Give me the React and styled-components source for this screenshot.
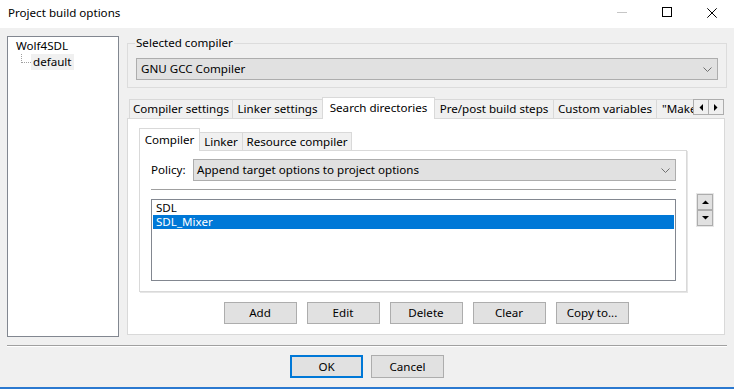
import React from "react";
import styled, { createGlobalStyle } from "styled-components";

const GlobalStyle = createGlobalStyle`
  html, body { margin: 0; padding: 0; background: #f0f0f0; }
  body {
    font-family: "Noto Sans", "Open Sans", sans-serif;
    font-size: 11.6px;
    color: #000;
  }
  * { box-sizing: border-box; }
`;

const Window = styled.div`
  width: 734px;
  height: 389px;
  display: flex;
  flex-direction: column;
  background: #f0f0f0;
  overflow: hidden;
  border-bottom: 2px solid #2b79d0;
`;

const TitleBar = styled.div`
  height: 28px;
  flex: none;
  background: #fff;
  display: flex;
  align-items: center;
  padding-left: 8px;
`;

const Title = styled.span`
  flex: 1;
  line-height: 16px;
  margin-top: -3px;
`;

const WinButton = styled.div`
  width: 45px;
  height: 28px;
  display: flex;
  justify-content: center;
  padding-top: 7px;
`;

const Body = styled.div`
  padding: 8px 7px 0 7px;
  display: flex;
  flex-direction: column;
`;

const MainRow = styled.div`
  display: flex;
  gap: 8px;
  height: 301px;
`;

const Tree = styled.div`
  width: 112px;
  height: 301px;
  flex: none;
  background: #fff;
  border: 1px solid #828790;
  padding: 1px 0 0 6px;
`;

const TreeRow = styled.div`
  height: 16px;
  line-height: 16px;
  display: flex;
  align-items: flex-start;
  padding-left: ${(p) => p.$indent || 0}px;
`;

const Connector = styled.span`
  width: 10px;
  height: 9px;
  flex: none;
  border-left: 1px dotted #a0a0a0;
  border-bottom: 1px dotted #a0a0a0;
`;

const TreeLabel = styled.span`
  padding: 0 2px;
  background: ${(p) => (p.$selected ? "#f0f0f0" : "transparent")};
  height: 16px;
`;

const RightCol = styled.div`
  flex: 1;
  display: flex;
  flex-direction: column;
  min-width: 0;
`;

const GroupBox = styled.fieldset`
  margin: 0;
  height: 52px;
  flex: none;
  padding: 0 8px 0 8px;
  border: 1px solid #dcdcdc;
  min-width: 0;
`;

const Legend = styled.legend`
  padding: 0 1px;
  margin-left: -1px;
  line-height: 14px;
  height: 14px;
`;

const Combo = styled.div`
  height: 22px;
  margin-top: ${(p) => p.$mt || 0}px;
  flex: ${(p) => (p.$grow ? 1 : "none")};
  background: #e1e1e1;
  border: 1px solid #adadad;
  display: flex;
  align-items: center;
  justify-content: space-between;
  padding: 0 5px 0 ${(p) => p.$pl || 4}px;
  line-height: 16px;
`;

const Chevron = () => (
  <svg width="9" height="5" viewBox="0 0 9 5">
    <polyline points="0.5,0.5 4.5,4.5 8.5,0.5" fill="none" stroke="#707070" strokeWidth="1" />
  </svg>
);

const TabStrip = styled.div`
  margin-top: ${(p) => p.$mt || 0}px;
  height: ${(p) => p.$h}px;
  display: flex;
  align-items: flex-start;
  padding-left: ${(p) => p.$pl || 0}px;
  flex: none;
`;

const TabList = styled.div`
  flex: 1;
  min-width: 0;
  height: 100%;
  display: flex;
  align-items: flex-start;
  overflow: hidden;
`;

const Tab = styled.div`
  flex: none;
  width: ${(p) => p.$w}px;
  margin-left: ${(p) => (p.$first ? 0 : -1)}px;
  margin-top: ${(p) => p.$mt}px;
  height: ${(p) => p.$h}px;
  background: ${(p) => (p.$active ? "#fff" : "#f0f0f0")};
  border: 1px solid #d9d9d9;
  border-bottom: none;
  position: relative;
  z-index: ${(p) => (p.$active ? 2 : 1)};
  display: flex;
  align-items: center;
  justify-content: ${(p) => (p.$left ? "flex-start" : "center")};
  padding-left: ${(p) => (p.$left ? 5 : 0)}px;
  padding-bottom: ${(p) => p.$pb || 0}px;
  white-space: nowrap;
  overflow: hidden;
  line-height: 16px;
`;

const ScrollArrows = styled.div`
  flex: none;
  display: flex;
  margin: 2px 3px 0 0;
`;

const ArrowBtn = styled.div`
  width: 16px;
  height: 16px;
  border: 1px solid #adadad;
  margin-left: ${(p) => (p.$second ? -1 : 0)}px;
  background: #f0f0f0;
  display: flex;
  align-items: center;
  justify-content: center;
`;

const Panel = styled.div`
  width: 598px;
  height: 217px;
  margin-top: -1px;
  background: #fff;
  border: 1px solid #d9d9d9;
  padding: 9px 11px 0 11px;
  display: flex;
  flex-direction: column;
`;

const InnerRow = styled.div`
  display: flex;
  gap: 10px;
  align-items: flex-start;
`;

const InnerPanel = styled.div`
  width: 549px;
  height: 142px;
  margin-top: -1px;
  background: #fff;
  border: 1px solid #d9d9d9;
  box-shadow: 1px 1px 0 #e6e6e6;
  padding: 8px 10px 0 11px;
  display: flex;
  flex-direction: column;
`;

const PolicyRow = styled.div`
  display: flex;
  align-items: center;
  height: 22px;
`;

const Label = styled.span`
  width: 42px;
  flex: none;
  line-height: 16px;
`;

const Separator = styled.div`
  height: 1px;
  background: #a0a0a0;
  margin-top: 8px;
  flex: none;
`;

const ListBox = styled.div`
  margin-top: 9px;
  height: 82px;
  border: 1px solid #828790;
  background: #fff;
  padding: 1px;
`;

const ListItem = styled.div`
  height: 14px;
  line-height: 14px;
  padding-left: 3px;
  background: ${(p) => (p.$selected ? "#0078d7" : "transparent")};
  color: ${(p) => (p.$selected ? "#fff" : "#000")};
`;

const Spin = styled.div`
  margin-top: 43px;
  width: 16px;
  display: flex;
  flex-direction: column;
  outline: 1px solid #e6e6e6;
`;

const SpinBtn = styled.div`
  width: 16px;
  height: 16px;
  border: 1px solid #adadad;
  background: #e1e1e1;
  display: flex;
  align-items: center;
  justify-content: center;
`;

const ButtonRow = styled.div`
  display: flex;
  justify-content: center;
  gap: 10px;
  margin-top: 10px;
  margin-left: -11px;
  margin-right: -11px;
`;

const Button = styled.button`
  width: 73px;
  height: ${(p) => (p.$tall ? 23 : 22)}px;
  background: #e1e1e1;
  border: ${(p) => (p.$default ? "2px solid #0078d7" : "1px solid #adadad")};
  font: inherit;
  color: #000;
  padding: 0;
  line-height: 16px;
`;

const HSep = styled.div`
  margin: 8px 7px 0 7px;
  height: 2px;
  border-top: 1px solid #a0a0a0;
  border-bottom: 1px solid #fff;
  flex: none;
`;

const Footer = styled.div`
  flex: 1;
  display: flex;
  justify-content: center;
  align-items: flex-start;
  gap: 8px;
  padding-top: 8px;
`;

const Tri = ({ dir }) => {
  const pts = {
    up: "0,4 3.5,0.5 7,4",
    down: "0,0 7,0 3.5,3.5",
    left: "4,0 4,7 0.5,3.5",
    right: "0,0 0,7 3.5,3.5",
  }[dir];
  const vertical = dir === "up" || dir === "down";
  return (
    <svg width={vertical ? 7 : 4} height={vertical ? 4 : 7} viewBox={vertical ? "0 0 7 4" : "0 0 4 7"}>
      <polygon points={pts} fill="#000" />
    </svg>
  );
};

export default function App() {
  const tabs = [
    { t: "Compiler settings", w: 104 },
    { t: "Linker settings", w: 91 },
    { t: "Search directories", w: 113, active: true },
    { t: "Pre/post build steps", w: 120 },
    { t: "Custom variables", w: 104 },
    { t: "\"Make\" commands", w: 120, left: true },
  ];
  const innerTabs = [
    { t: "Compiler", w: 61, active: true },
    { t: "Linker", w: 44 },
    { t: "Resource compiler", w: 110 },
  ];
  return (
    <>
      <GlobalStyle />
      <Window>
        <TitleBar>
          <Title>Project build options</Title>
          <WinButton>
            <svg width="10" height="10" viewBox="0 0 10 10">
              <line x1="0" y1="5.5" x2="10" y2="5.5" stroke="#c6c6c6" strokeWidth="1" />
            </svg>
          </WinButton>
          <WinButton>
            <svg width="10" height="10" viewBox="0 0 10 10">
              <rect x="0.5" y="0.5" width="9" height="9" fill="none" stroke="#000" strokeWidth="1" />
            </svg>
          </WinButton>
          <WinButton>
            <svg width="10" height="10" viewBox="0 0 10 10" style={{ marginTop: 1 }}>
              <path d="M0.3 0.3 L9.7 9.7 M9.7 0.3 L0.3 9.7" stroke="#000" strokeWidth="1" />
            </svg>
          </WinButton>
        </TitleBar>
        <Body>
          <MainRow>
            <Tree>
              <TreeRow>
                <TreeLabel>Wolf4SDL</TreeLabel>
              </TreeRow>
              <TreeRow $indent={7}>
                <Connector />
                <TreeLabel $selected>default</TreeLabel>
              </TreeRow>
            </Tree>
            <RightCol>
              <GroupBox>
                <Legend>Selected compiler</Legend>
                <Combo $mt={8}>
                  <span>GNU GCC Compiler</span>
                  <Chevron />
                </Combo>
              </GroupBox>
              <TabStrip $h={22} $pl={2} $mt={9}>
                <TabList>
                  {tabs.map((x, i) => (
                    <Tab
                      key={x.t}
                      $w={x.w}
                      $first={i === 0}
                      $active={x.active}
                      $left={x.left}
                      $h={x.active ? 22 : 19}
                      $mt={x.active ? 0 : 2}
                      $pb={x.active ? 2 : 0}
                    >
                      {x.t}
                    </Tab>
                  ))}
                </TabList>
                <ScrollArrows>
                  <ArrowBtn><Tri dir="left" /></ArrowBtn>
                  <ArrowBtn $second><Tri dir="right" /></ArrowBtn>
                </ScrollArrows>
              </TabStrip>
              <Panel>
                <TabStrip $h={23}>
                  {innerTabs.map((x, i) => (
                    <Tab
                      key={x.t}
                      $w={x.w}
                      $first={i === 0}
                      $active={x.active}
                      $h={x.active ? 23 : 18}
                      $mt={x.active ? 0 : 4}
                      $pb={x.active ? 1 : 0}
                    >
                      {x.t}
                    </Tab>
                  ))}
                </TabStrip>
                <InnerRow>
                  <InnerPanel>
                    <PolicyRow>
                      <Label>Policy:</Label>
                      <Combo $grow $pl={3}>
                        <span>Append target options to project options</span>
                        <Chevron />
                      </Combo>
                    </PolicyRow>
                    <Separator />
                    <ListBox>
                      <ListItem>SDL</ListItem>
                      <ListItem $selected>SDL_Mixer</ListItem>
                    </ListBox>
                  </InnerPanel>
                  <Spin>
                    <SpinBtn><Tri dir="up" /></SpinBtn>
                    <SpinBtn><Tri dir="down" /></SpinBtn>
                  </Spin>
                </InnerRow>
                <ButtonRow>
                  <Button>Add</Button>
                  <Button>Edit</Button>
                  <Button>Delete</Button>
                  <Button>Clear</Button>
                  <Button>Copy to...</Button>
                </ButtonRow>
              </Panel>
            </RightCol>
          </MainRow>
        </Body>
        <HSep />
        <Footer>
          <Button $tall $default>OK</Button>
          <Button $tall>Cancel</Button>
        </Footer>
      </Window>
    </>
  );
}
